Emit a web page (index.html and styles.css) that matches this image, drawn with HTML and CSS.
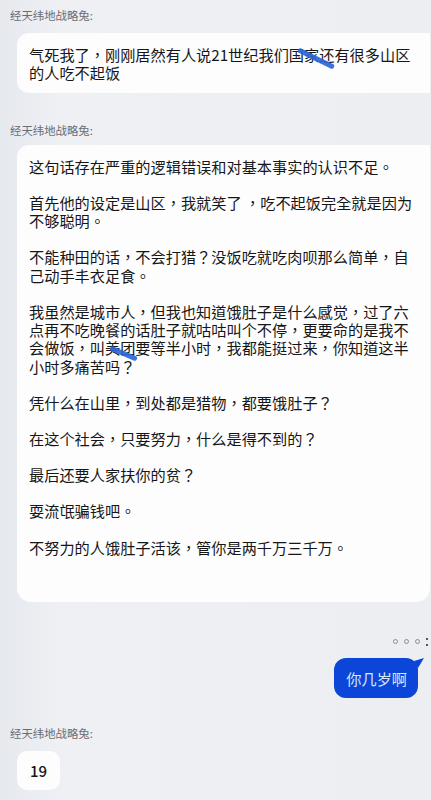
FILE: index.html
```html
<!DOCTYPE html>
<html lang="zh-CN">
<head>
    <meta charset="UTF-8">
    <meta name="viewport" content="width=device-width, initial-scale=1.0">
    <title>聊天记录</title>
    <link rel="stylesheet" href="styles.css">
</head>
<body>
    <div class="chat">
        <div class="msg msg-first">
            <div class="sender">经天纬地战略兔:</div>
            <div class="bubble bubble-in" lang="zh-TW">
                <p>气死我了，刚刚居然有人说21世纪我们国家还有很多山区的人吃不起饭</p>
                <span class="scribble scribble-one"></span>
            </div>
        </div>

        <div class="msg msg-long">
            <div class="sender">经天纬地战略兔:</div>
            <div class="bubble bubble-in bubble-long" lang="zh-TW">
                <p>这句话存在严重的逻辑错误和对基本事实的认识不足。</p>
                <p>首先他的设定是山区，我就笑了 ，吃不起饭完全就是因为不够聪明。</p>
                <p>不能种田的话，不会打猎？没饭吃就吃肉呗那么简单，自己动手丰衣足食。</p>
                <p>我虽然是城市人，但我也知道饿肚子是什么感觉，过了六点再不吃晚餐的话肚子就咕咕叫个不停，更要命的是我不会做饭，叫美团要等半小时，我都能挺过来，你知道这半小时多痛苦吗？</p>
                <p>凭什么在山里，到处都是猎物，都要饿肚子？</p>
                <p>在这个社会，只要努力，什么是得不到的？</p>
                <p>最后还要人家扶你的贫？</p>
                <p>耍流氓骗钱吧。</p>
                <p>不努力的人饿肚子活该，管你是两千万三千万。</p>
                <span class="scribble scribble-two"></span>
            </div>
        </div>

        <div class="msg msg-out">
            <div class="status">
                <span class="dot"></span>
                <span class="dot"></span>
                <span class="dot"></span>
                <span class="colon"></span>
            </div>
            <div class="bubble bubble-me">你几岁啊</div>
        </div>

        <div class="msg msg-last">
            <div class="sender">经天纬地战略兔:</div>
            <div class="bubble bubble-in bubble-short">19</div>
        </div>
    </div>
</body>
</html>
```

FILE: styles.css
```css
body {
    margin: 0;
    padding: 0;
    background-color: #eceef2;
    font-family: "Noto Sans CJK SC", "Noto Sans", sans-serif;
    color: #161616;
}
.chat {
    width: 431px;
    height: 800px;
    overflow: hidden;
    background: linear-gradient(90deg, #e6e9ee 0, #eef0f4 60px, #eceef2 100%);
}
.msg {
    display: flex;
    flex-direction: column;
}
.sender {
    font-size: 11.4px;
    line-height: 16px;
    color: #6b6d72;
    padding-left: 10px;
}
.bubble {
    position: relative;
    background-color: #fdfdfe;
    font-size: 15.2px;
    line-height: 18.3px;
}
.bubble p {
    margin: 0;
}
.bubble-in[lang="zh-TW"] {
    font-family: "Noto Sans CJK TC", "Noto Sans CJK SC", sans-serif;
}
.bubble-in {
    margin-left: 17px;
    width: 389px;
    padding: 12px 12px 11px 12px;
    border-radius: 12px 0 0 12px;
}
.msg-first {
    padding-top: 7px;
}
.msg-first .sender {
    margin-bottom: 10px;
}
.msg-long {
    margin-top: 29px;
}
.msg-long .sender {
    margin-bottom: 7px;
}
.bubble-long {
    padding-top: 12px;
    padding-bottom: 46px;
    border-radius: 12px 0 14px 14px;
}
.bubble-long p + p {
    margin-top: 17.9px;
}
.scribble {
    position: absolute;
    height: 5px;
    border-radius: 3px;
    background-color: #2a66d8;
    opacity: 0.92;
}
.scribble-one {
    left: 279px;
    top: 23px;
    width: 40px;
    transform: rotate(26deg);
}
.scribble-two {
    left: 92px;
    top: 206px;
    width: 29px;
    transform: rotate(23deg);
}
.msg-out {
    align-items: flex-end;
    margin-top: 36px;
    padding-right: 13px;
}
.status {
    display: flex;
    align-items: center;
    gap: 6px;
    height: 8px;
    margin-right: -10px;
    margin-bottom: 12px;
}
.dot {
    width: 3px;
    height: 3px;
    border: 1px solid #8a8d93;
    border-radius: 50%;
}
.colon {
    width: 2px;
    height: 8px;
    background:
        radial-gradient(circle, #55585e 0.9px, transparent 1.1px) center top / 2px 2px no-repeat,
        radial-gradient(circle, #55585e 0.9px, transparent 1.1px) center bottom / 2px 2px no-repeat;
}
.bubble-me {
    background-color: #0b46d8;
    color: #d9e6ff;
    padding: 11px 11px 11px 12px;
    border-radius: 12px;
}
.bubble-me::after {
    content: "";
    position: absolute;
    right: -6px;
    top: 0;
    width: 10px;
    height: 10px;
    background-color: #0b46d8;
    clip-path: polygon(0 30%, 100% 0, 40% 100%);
}
.msg-last {
    margin-top: 27px;
}
.msg-last .sender {
    margin-bottom: 10px;
}
.bubble-short {
    width: auto;
    align-self: flex-start;
    padding: 10px 13px;
    border-radius: 10px;
    font-size: 15px;
    font-weight: 500;
    line-height: 19px;
}
```
